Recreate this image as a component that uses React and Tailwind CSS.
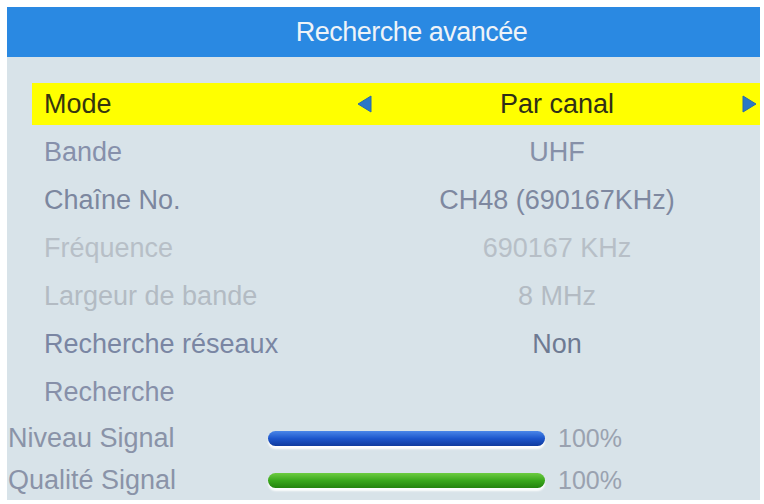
import React from 'react';

const rows = [
  { label: 'Bande', value: 'UHF', labelColor: 'text-[#8690ab]', valueColor: 'text-[#8690a8]' },
  { label: 'Chaîne No.', value: 'CH48 (690167KHz)', labelColor: 'text-[#7c879f]', valueColor: 'text-[#7e88a0]' },
  { label: 'Fréquence', value: '690167 KHz', labelColor: 'text-[#b7bfc7]', valueColor: 'text-[#b7bfc7]' },
  { label: 'Largeur de bande', value: '8 MHz', labelColor: 'text-[#b3bbc3]', valueColor: 'text-[#b3bbc3]' },
  { label: 'Recherche réseaux', value: 'Non', labelColor: 'text-[#7a86a3]', valueColor: 'text-[#6e7a92]' },
  { label: 'Recherche', value: '', labelColor: 'text-[#8790a9]', valueColor: '' },
];

function Arrow({ dir }) {
  return (
    <svg width="15" height="18" viewBox="0 0 15 18" className="shrink-0">
      {dir === 'left' ? (
        <path d="M14 1 L14 17 L1 9 Z" fill="#2b78c6" stroke="#2a6aa8" strokeWidth="1" strokeLinejoin="round" />
      ) : (
        <path d="M1 1 L1 17 L14 9 Z" fill="#2b78c6" stroke="#2a6aa8" strokeWidth="1" strokeLinejoin="round" />
      )}
    </svg>
  );
}

function SignalRow({ label, bar, height }) {
  return (
    <div className={`flex items-center ${height}`}>
      <div className="w-[261px] pl-[1px] text-[#8a93a8]">{label}</div>
      <div className={`w-[277px] h-[15px] rounded-full shadow-[0_3px_2px_rgba(255,255,255,0.95)] ${bar}`} />
      <div className="ml-[13px] text-[25px] text-[#9aa2b0]">100%</div>
    </div>
  );
}

export default function App() {
  return (
    <div className="w-[764px] h-[504px] bg-white pt-[7px] pl-[7px] overflow-hidden font-['Liberation_Sans',Arial,sans-serif]">
      <div className="w-[753px] h-[493px] bg-[#d8e3e9] flex flex-col text-[27px] leading-none">
        <div className="h-[50px] bg-[#2a89e2] flex items-center justify-center text-[#eef3f8] tracking-[-0.5px]">
          <span className="ml-[56px]">Recherche avancée</span>
        </div>

        <div className="pt-[23px] flex flex-col">
          <div className="ml-[25px] h-[48px] flex items-center">
            <div className="w-full h-[42px] bg-[#ffff00] flex items-center pr-[3px]">
              <div className="w-[325px] pl-[12px] text-[#35350f]">Mode</div>
              <Arrow dir="left" />
              <div className="flex-1 text-center text-[#2f2f18]">Par canal</div>
              <Arrow dir="right" />
            </div>
          </div>

          {rows.map((r) => (
            <div key={r.label} className="ml-[25px] h-[48px] flex items-center pr-[3px]">
              <div className={`w-[340px] pl-[12px] ${r.labelColor}`}>{r.label}</div>
              <div className={`flex-1 text-center pr-[15px] ${r.valueColor}`}>{r.value}</div>
            </div>
          ))}

          <SignalRow
            label="Niveau Signal"
            height="h-[44px]"
            bar="bg-gradient-to-b from-[#4a86e8] via-[#1d56cc] to-[#0f3a9e]"
          />
          <SignalRow
            label="Qualité Signal"
            height="h-[40px]"
            bar="bg-gradient-to-b from-[#6ccc40] via-[#3aa81c] to-[#24840e]"
          />
        </div>
      </div>
    </div>
  );
}
